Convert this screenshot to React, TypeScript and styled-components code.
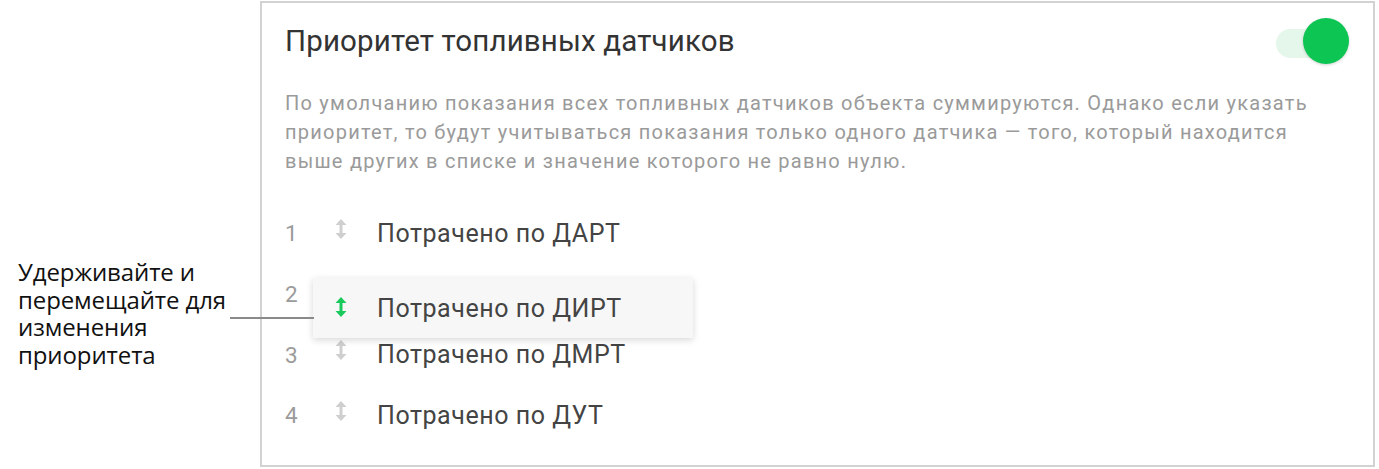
import React from 'react';
import styled, { createGlobalStyle } from 'styled-components';

const GlobalStyle = createGlobalStyle`
  html, body {
    margin: 0;
    padding: 0;
    background: #ffffff;
  }
  * {
    box-sizing: border-box;
  }
`;

const Page = styled.div`
  position: relative;
  display: flex;
  align-items: flex-start;
  width: 1379px;
  height: 469px;
  padding-top: 1px;
  overflow: hidden;
`;

const Hint = styled.div`
  width: 260px;
  flex-shrink: 0;
  padding: 257px 0 0 18px;
  font-family: 'Open Sans', 'Noto Sans', sans-serif;
  font-size: 24px;
  line-height: 27.5px;
  letter-spacing: -0.1px;
  color: #111;
`;

const Leader = styled.div`
  position: absolute;
  left: 230px;
  top: 317px;
  width: 84px;
  height: 2px;
  background: #8a8a8a;
  z-index: 3;
`;

const Card = styled.section`
  position: relative;
  width: 1115px;
  height: 466px;
  border: 2px solid #d2d2d2;
  padding: 17px 24px 0 23px;
  font-family: Roboto, 'Liberation Sans', sans-serif;
`;

const Header = styled.div`
  display: flex;
  align-items: center;
  justify-content: space-between;
  height: 42px;
`;

const Title = styled.h2`
  margin: 0;
  font-size: 29.5px;
  font-weight: 400;
  letter-spacing: 0.15px;
  color: #333;
`;

const Switch = styled.div`
  position: relative;
  width: 73px;
  height: 46px;
`;

const Track = styled.div`
  position: absolute;
  left: 0;
  top: 11px;
  width: 60px;
  height: 29px;
  border-radius: 15px;
  background: #e5f6eb;
`;

const Knob = styled.div`
  position: absolute;
  right: 0;
  top: 0;
  width: 46px;
  height: 46px;
  border-radius: 50%;
  background: #0cc553;
  box-shadow: 0 1px 3px rgba(0, 0, 0, 0.18);
`;

const Description = styled.p`
  margin: 27px 0 0;
  font-size: 20px;
  line-height: 29px;
  letter-spacing: 1.24px;
  color: #9a9a9a;
  white-space: nowrap;
`;

const List = styled.ol`
  list-style: none;
  margin: 27px 0 0;
  padding: 0;
  display: flex;
  flex-direction: column;
`;

const Row = styled.li`
  display: flex;
  align-items: center;
  height: 60.7px;
`;

const Index = styled.span`
  width: 50px;
  font-size: 22.5px;
  color: #9b9b9b;
`;

const Handle = styled.span<{ $active?: boolean }>`
  display: flex;
  width: 42px;
  margin-bottom: ${(p) => (p.$active ? '3px' : '9px')};
  color: ${(p) => (p.$active ? '#19c95c' : '#cfcfcf')};
`;

const Label = styled.span`
  font-size: 25px;
  letter-spacing: 0.55px;
  color: #444;
`;

const Dragged = styled.div`
  position: absolute;
  left: 51px;
  top: 275px;
  width: 380px;
  height: 60px;
  display: flex;
  align-items: center;
  padding-left: 22px;
  background: #f7f7f7;
  box-shadow: 0 2px 7px rgba(0, 0, 0, 0.16);
  z-index: 2;
`;

const ArrowIcon = () => (
  <svg width="12" height="22" viewBox="0 0 12 22" fill="currentColor">
    <path d="M6 1 L11.5 7 L7.5 7 L7.5 15 L11.5 15 L6 21 L0.5 15 L4.5 15 L4.5 7 L0.5 7 Z" />
  </svg>
);

const sensors = ['Потрачено по ДАРТ', 'Потрачено по ДИРТ', 'Потрачено по ДМРТ', 'Потрачено по ДУТ'];
const draggedIndex = 1;

export default function App() {
  return (
    <Page>
      <GlobalStyle />
      <Hint>
        Удерживайте и
        <br />
        перемещайте для
        <br />
        изменения
        <br />
        приоритета
      </Hint>
      <Leader />
      <Card>
        <Header>
          <Title>Приоритет топливных датчиков</Title>
          <Switch>
            <Track />
            <Knob />
          </Switch>
        </Header>
        <Description>
          По умолчанию показания всех топливных датчиков объекта суммируются. Однако если указать
          <br />
          приоритет, то будут учитываться показания только одного датчика — того, который находится
          <br />
          выше других в списке и значение которого не равно нулю.
        </Description>
        <List>
          {sensors.map((name, i) => (
            <Row key={name}>
              <Index>{i + 1}</Index>
              {i !== draggedIndex && (
                <>
                  <Handle>
                    <ArrowIcon />
                  </Handle>
                  <Label>{name}</Label>
                </>
              )}
            </Row>
          ))}
        </List>
        <Dragged>
          <Handle $active>
            <ArrowIcon />
          </Handle>
          <Label>{sensors[draggedIndex]}</Label>
        </Dragged>
      </Card>
    </Page>
  );
}
